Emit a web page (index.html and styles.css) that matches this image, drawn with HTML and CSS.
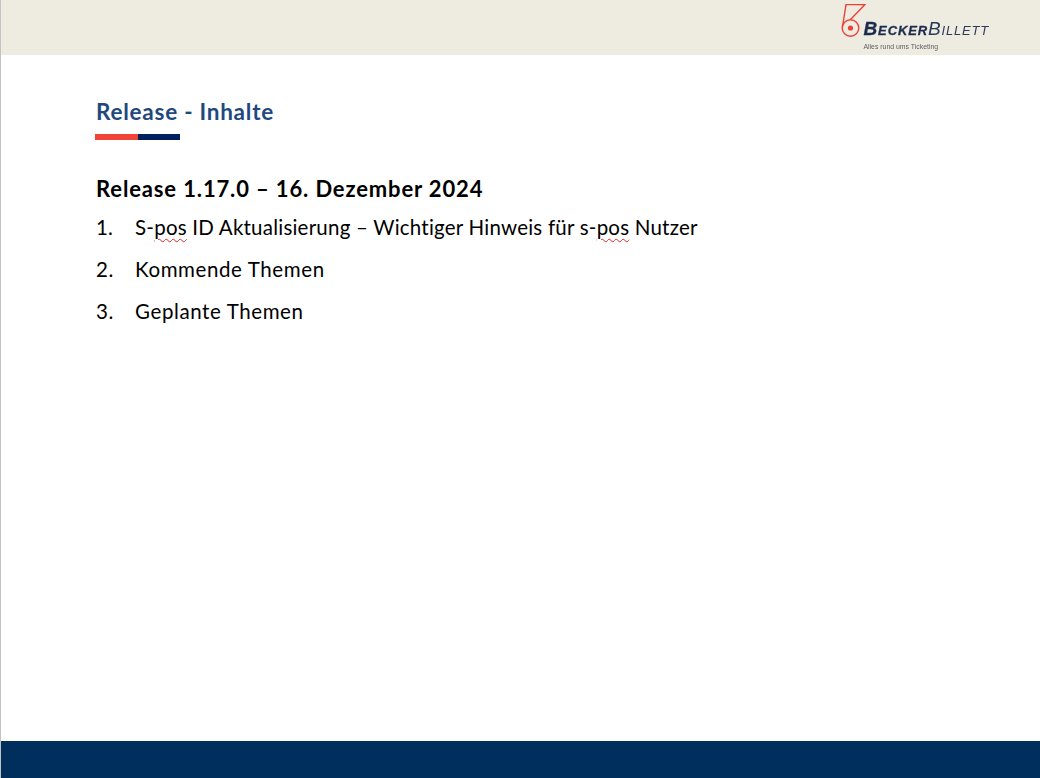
FILE: index.html
```html
<!DOCTYPE html>
<html lang="de">
<head>
<meta charset="utf-8">
<title>Release - Inhalte</title>
<link rel="stylesheet" href="styles.css">
</head>
<body>
<div class="slide">
  <header class="top">
    <div class="logo">
      <svg class="mark" width="25" height="38" viewBox="0 0 25 38" aria-hidden="true">
        <path d="M1.6 26L5 4.6H24L9.5 19.5" fill="none" stroke="#ee4036" stroke-width="1.4"/>
        <circle cx="9.5" cy="28" r="8.3" fill="none" stroke="#ee4036" stroke-width="1.4"/>
        <circle cx="9.5" cy="28" r="2.6" fill="#ee4036"/>
      </svg>
      <div class="logo-text">
        <div class="brand"><b>Becker</b><span>Billett</span></div>
        <div class="tag">Alles rund ums Ticketing</div>
      </div>
    </div>
  </header>
  <main class="content">
    <h1 class="title">Release - Inhalte</h1>
    <div class="rule"><i class="rule-red"></i><i class="rule-navy"></i></div>
    <h2 class="release">Release 1.17.0 – 16. Dezember 2024</h2>
    <ol class="topics">
      <li><span class="num">1.</span><span>S-<span class="typo">pos</span> ID Aktualisierung – Wichtiger Hinweis für s-<span class="typo">pos</span> Nutzer</span></li>
      <li class="short"><span class="num">2.</span><span>Kommende Themen</span></li>
      <li class="short"><span class="num">3.</span><span>Geplante Themen</span></li>
    </ol>
  </main>
  <footer class="bottom"></footer>
</div>
</body>
</html>
```
FILE: styles.css
```css
* { box-sizing: border-box; }
html, body { margin: 0; padding: 0; background: #fff; }
.slide {
  width: 1040px;
  height: 778px;
  display: flex;
  flex-direction: column;
  overflow: hidden;
  border-left: 1px solid #c3c3c3;
  font-family: Lato, "Open Sans", sans-serif;
  color: #000;
}
.top {
  height: 55px;
  flex: none;
  background: #eeebe1;
  display: flex;
  justify-content: flex-end;
  padding-right: 51px;
}
.logo { display: flex; align-items: flex-start; filter: blur(0.3px); }
.mark { display: block; margin-right: -3px; }
.logo-text { padding-top: 18px; }
.brand {
  font-family: "Liberation Sans", sans-serif;
  font-style: italic;
  line-height: 21px;
  color: #1d2c4d;
  font-variant: small-caps;
  white-space: nowrap;
}
.brand b { font-weight: 700; font-size: 19px; letter-spacing: .9px; -webkit-text-stroke: .3px #1d2c4d; }
.brand span { font-weight: 400; font-size: 19px; letter-spacing: .8px; color: #2c3a58; }
.tag {
  font-family: "Liberation Sans", sans-serif;
  font-size: 6.9px;
  line-height: 9px;
  color: #5d5f60;
  margin-top: 2px;
  white-space: nowrap;
}
.content { flex: 1; padding: 43px 0 0 94px; }
.title {
  margin: 0 0 0 1px;
  font-size: 22.5px;
  line-height: 28px;
  font-weight: 700;
  letter-spacing: .75px;
  color: #1f497d;
}
.rule { display: flex; height: 6px; width: 85px; margin-top: 8px; }
.rule-red { width: 43px; background: #f04438; }
.rule-navy { width: 42px; background: #002060; }
.release {
  margin: 34px 0 0 1px;
  font-size: 22px;
  line-height: 30px;
  font-weight: 700;
  letter-spacing: .86px;
}
.topics { list-style: none; margin: 9px 0 0 1px; padding: 0; }
.topics li {
  display: flex;
  font-size: 20.5px;
  line-height: 28px;
  height: 42px;
  letter-spacing: .22px;
  white-space: nowrap;
}
.topics .short { letter-spacing: .6px; }
.num { width: 39px; flex: none; }
.typo {
  text-decoration: underline wavy #e0262b 1px;
  text-underline-offset: 3px;
}
.bottom { height: 37px; flex: none; background: #002f5d; }
```
